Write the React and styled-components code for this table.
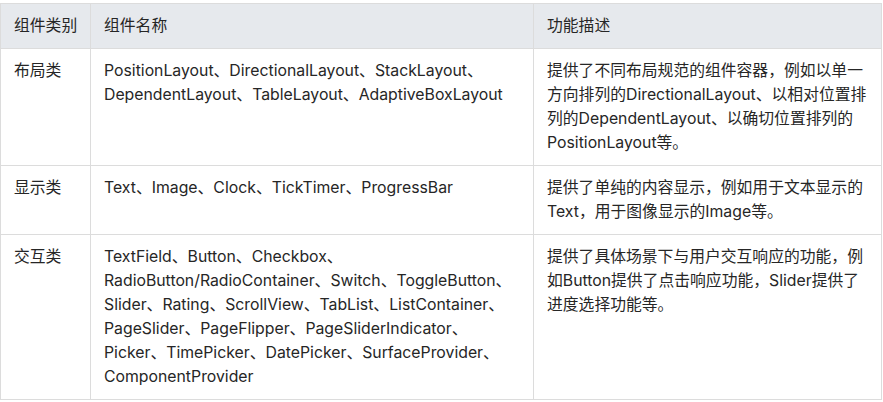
import React from "react";
import styled, { createGlobalStyle } from "styled-components";

const Global = createGlobalStyle`
  html, body { margin: 0; padding: 0; background: #ffffff; }
  body { font-family: Inter, "Noto Sans CJK SC", sans-serif; }
`;

const Table = styled.table`
  margin-top: 3px;
  width: 881px;
  table-layout: fixed;
  border-collapse: collapse;
  font-size: 15.8px;
  line-height: 24px;
  color: #262626;
`;

const HeadCell = styled.th`
  background: #e6e9ed;
  border: 1px solid #dcdcdc;
  padding: 10px 13px;
  text-align: left;
  font-weight: normal;
  vertical-align: top;
  white-space: nowrap;
`;

const Cell = styled.td`
  border: 1px solid #dcdcdc;
  padding: 10px 13px;
  vertical-align: top;
  white-space: nowrap;
`;

const Line = styled.span`
  display: block;
  white-space: nowrap;
`;

const rows = [
  {
    cat: "布局类",
    names: [
      "PositionLayout、DirectionalLayout、StackLayout、",
      "DependentLayout、TableLayout、AdaptiveBoxLayout",
    ],
    desc: [
      "提供了不同布局规范的组件容器，例如以单一",
      "方向排列的DirectionalLayout、以相对位置排",
      "列的DependentLayout、以确切位置排列的",
      "PositionLayout等。",
    ],
  },
  {
    cat: "显示类",
    names: ["Text、Image、Clock、TickTimer、ProgressBar"],
    desc: ["提供了单纯的内容显示，例如用于文本显示的", "Text，用于图像显示的Image等。"],
  },
  {
    cat: "交互类",
    names: [
      "TextField、Button、Checkbox、",
      "RadioButton/RadioContainer、Switch、ToggleButton、",
      "Slider、Rating、ScrollView、TabList、ListContainer、",
      "PageSlider、PageFlipper、PageSliderIndicator、",
      "Picker、TimePicker、DatePicker、SurfaceProvider、",
      "ComponentProvider",
    ],
    desc: [
      "提供了具体场景下与用户交互响应的功能，例",
      "如Button提供了点击响应功能，Slider提供了",
      "进度选择功能等。",
    ],
  },
];

export default function App() {
  return (
    <>
      <Global />
      <Table>
        <colgroup>
          <col style={{ width: 90 }} />
          <col style={{ width: 443 }} />
          <col style={{ width: 348 }} />
        </colgroup>
        <thead>
          <tr>
            <HeadCell>组件类别</HeadCell>
            <HeadCell>组件名称</HeadCell>
            <HeadCell>功能描述</HeadCell>
          </tr>
        </thead>
        <tbody>
          {rows.map((r) => (
            <tr key={r.cat}>
              <Cell>{r.cat}</Cell>
              <Cell>
                {r.names.map((l) => (
                  <Line key={l}>{l}</Line>
                ))}
              </Cell>
              <Cell>
                {r.desc.map((l) => (
                  <Line key={l}>{l}</Line>
                ))}
              </Cell>
            </tr>
          ))}
        </tbody>
      </Table>
    </>
  );
}
